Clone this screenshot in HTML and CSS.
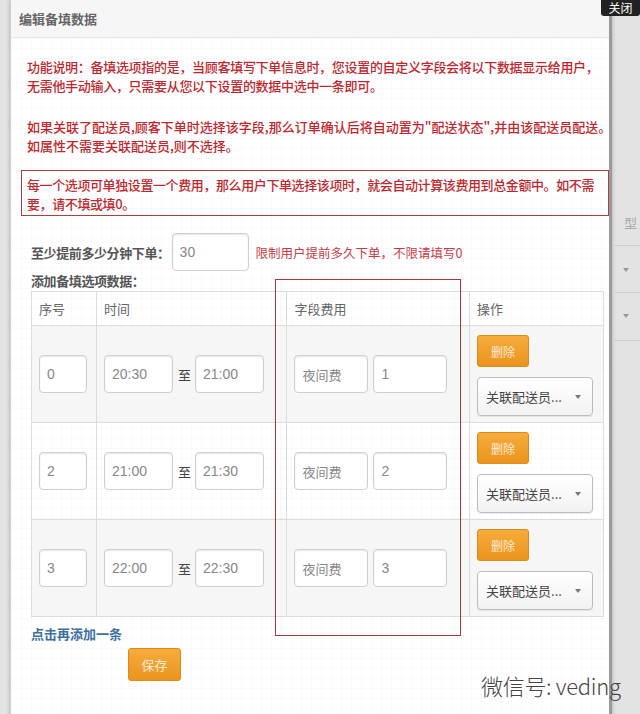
FILE: index.html
```html
<!DOCTYPE html>
<html lang="zh-CN">
<head>
<meta charset="utf-8">
<title>编辑备填数据</title>
<link rel="stylesheet" href="styles.css">
</head>
<body>
<div class="backdrop">
  <div class="side-right">
    <span class="side-char">型</span>
    <span class="side-line l1"></span>
    <span class="side-arrow a1"></span>
    <span class="side-line l2"></span>
    <span class="side-arrow a2"></span>
    <span class="side-line l3"></span>
  </div>
  <div class="modal">
    <div class="modal-head">编辑备填数据</div>
    <div class="modal-body">
      <p class="note first">功能说明：备填选项指的是，当顾客填写下单信息时，您设置的自定义字段会将以下数据显示给用户，<br>无需他手动输入，只需要从您以下设置的数据中选中一条即可。</p>
      <p class="note">如果关联了配送员,顾客下单时选择该字段,那么订单确认后将自动置为"配送状态",并由该配送员配送。<br>如属性不需要关联配送员,则不选择。</p>
      <div class="note-box">每一个选项可单独设置一个费用，那么用户下单选择该项时，就会自动计算该费用到总金额中。如不需<br>要，请不填或填0。</div>

      <div class="form">
        <div class="limit-row">
          <span class="label">至少提前多少分钟下单：</span>
          <input class="inp w-limit" type="text" value="30">
          <span class="hint">限制用户提前多久下单，不限请填写0</span>
        </div>
        <div class="label add-label">添加备填选项数据：</div>
        <table class="grid">
          <thead>
            <tr><th class="c1">序号</th><th class="c2">时间</th><th class="c3">字段费用</th><th class="c4">操作</th></tr>
          </thead>
          <tbody>
            <tr class="odd">
              <td><input class="inp w-seq" value="0"></td>
              <td><input class="inp w-time" value="20:30"><span class="to">至</span><input class="inp w-time" value="21:00"></td>
              <td><input class="inp w-fee fee-name" value="夜间费"><input class="inp w-fee gap" value="1"></td>
              <td class="ops"><button class="btn">删除</button><div class="sel">关联配送员...<span class="caret"></span></div></td>
            </tr>
            <tr>
              <td><input class="inp w-seq" value="2"></td>
              <td><input class="inp w-time" value="21:00"><span class="to">至</span><input class="inp w-time" value="21:30"></td>
              <td><input class="inp w-fee fee-name" value="夜间费"><input class="inp w-fee gap" value="2"></td>
              <td class="ops"><button class="btn">删除</button><div class="sel">关联配送员...<span class="caret"></span></div></td>
            </tr>
            <tr class="odd">
              <td><input class="inp w-seq" value="3"></td>
              <td><input class="inp w-time" value="22:00"><span class="to">至</span><input class="inp w-time" value="22:30"></td>
              <td><input class="inp w-fee fee-name" value="夜间费"><input class="inp w-fee gap" value="3"></td>
              <td class="ops"><button class="btn">删除</button><div class="sel">关联配送员...<span class="caret"></span></div></td>
            </tr>
          </tbody>
        </table>
        <a class="add-link">点击再添加一条</a>
        <div class="save-row"><button class="btn save">保存</button></div>
      </div>
      <div class="annot"></div>
    </div>
  </div>
  <div class="close">关闭</div>
  <div class="watermark">微信号: veding</div>
</div>
</body>
</html>
```

FILE: styles.css
```css
* { box-sizing: border-box; }
html, body { margin: 0; padding: 0; }
body {
  width: 640px;
  height: 714px;
  overflow: hidden;
  background: #e3e3e3;
  font-family: "Noto Sans CJK SC", "Noto Sans", sans-serif;
  font-size: 13px;
  color: #555;
}
.backdrop {
  position: relative;
  width: 640px;
  height: 714px;
  padding-left: 10px;
}
.modal {
  width: 602px;
  height: 730px;
  background: #fff;
  border-left: 1px solid #d0d0d0;
  border-right: 3px solid #9a9a9a;
  box-shadow: 0 0 4px rgba(0,0,0,0.25);
}
.modal-head {
  height: 38px;
  line-height: 38px;
  padding-left: 8px;
  background: #f6f6f6;
  border-bottom: 1px solid #e6e6e6;
  font-weight: bold;
  color: #666;
  font-size: 13px;
}
.modal-body {
  position: relative;
  padding: 19px 0 0 10px;
  height: 692px;
  background-color: #fff;
  background-image:
    linear-gradient(to right, rgba(0,0,0,0.018) 1px, transparent 1px),
    linear-gradient(to bottom, rgba(0,0,0,0.018) 1px, transparent 1px);
  background-size: 10px 10px;
}
.note {
  margin: 0 0 22px 6px;
  color: #c0272d;
  font-weight: 500;
  line-height: 19px;
  white-space: nowrap;
}
.note.first { letter-spacing: -0.3px; }
.note-box {
  width: 588px;
  margin-top: -7px;
  border: 1.5px solid #a84040;
  padding: 4px 5px 2px 5px;
  color: #c0272d;
  font-weight: 500;
  line-height: 19px;
  white-space: nowrap;
  letter-spacing: -0.4px;
}
.form { padding-left: 10px; }
.limit-row {
  display: flex;
  align-items: center;
  margin-top: 17px;
  height: 38px;
}
.label { font-weight: bold; color: #555; letter-spacing: -0.4px; }
.hint { color: #c93a45; margin-left: 7px; font-size: 12.5px; }
.add-label { margin-top: 0; line-height: 19px; }
.inp {
  height: 38px;
  border: 1px solid #cfcfcf;
  border-radius: 4px;
  box-shadow: inset 0 1px 2px rgba(0,0,0,0.1);
  padding: 0 7px;
  font-family: "Liberation Sans", "Noto Sans CJK SC", sans-serif;
  font-size: 14px;
  color: #888;
  background: #fff;
  vertical-align: middle;
  outline: none;
}
.w-limit { width: 77px; margin-left: 2px; }
.w-seq { width: 48px; }
.w-time { width: 69px; }
.w-fee { width: 74px; }
.fee-name { font-family: "Noto Sans CJK SC", sans-serif; font-size: 13px; }
.gap { margin-left: 5px; }
.to { display: inline-block; margin: 0 4px 0 5px; vertical-align: middle; color: #444; font-size: 13px; }
.grid {
  margin-top: 1px;
  width: 573px;
  border-collapse: collapse;
  border: 1px solid #dcdcdc;
}
.grid th, .grid td {
  border: 1px solid #dcdcdc;
  text-align: left;
  padding: 0 7px;
  font-weight: normal;
  white-space: nowrap;
}
.grid th { height: 34px; color: #666; font-size: 13px; }
.c1 { width: 65px; }
.c2 { width: 191px; }
.c3 { width: 183px; }
.c4 { width: 134px; }
.grid td { height: 97px; vertical-align: middle; }
.grid tr.odd td { background: rgba(245,245,245,0.85); }
.grid td.ops { vertical-align: top; padding-top: 9px; }
.btn {
  display: block;
  width: 52px;
  height: 32px;
  border: 1px solid #de8a1a;
  border-radius: 3px;
  background: linear-gradient(#f6ac3c, #ea941e);
  color: #fde9d6;
  font-family: "Noto Sans CJK SC", sans-serif;
  font-size: 12px;
  padding: 0;
}
.sel {
  position: relative;
  margin-top: 10px;
  width: 116px;
  height: 39px;
  line-height: 37px;
  border: 1px solid #bdbdbd;
  border-radius: 4px;
  background: linear-gradient(#fff, #f2f2f2);
  padding-left: 8px;
  color: #444;
  font-size: 13px;
  box-shadow: 0 1px 1px rgba(0,0,0,0.08);
}
.caret {
  position: absolute;
  right: 11px;
  top: 17px;
  border-left: 3px solid transparent;
  border-right: 3px solid transparent;
  border-top: 4px solid #777;
}
.add-link {
  display: block;
  margin-top: 7px;
  color: #3d6f9e;
  font-weight: bold;
  line-height: 19px;
}
.save-row { padding-left: 97px; margin-top: 5px; }
.btn.save { width: 53px; height: 33px; font-size: 13px; }
.annot {
  position: absolute;
  left: 264px;
  top: 241px;
  width: 186px;
  height: 357px;
  border: 1px solid #a83a3a;
  pointer-events: none;
}
.close {
  position: absolute;
  right: 0;
  top: 0;
  width: 39px;
  height: 16px;
  background: #222;
  color: #fff;
  border-radius: 0 0 3px 3px;
  font-size: 12px;
  line-height: 16px;
  text-align: center;
}
.watermark {
  position: absolute;
  left: 481px;
  top: 669px;
  font-family: "Noto Sans CJK SC", sans-serif;
  font-weight: 300;
  font-size: 22px;
  color: #444;
  letter-spacing: -0.3px;
}
.side-right {
  position: absolute;
  left: 614px;
  top: 0;
  width: 26px;
  height: 714px;
}
.side-char { position: absolute; left: 10px; top: 213px; font-size: 13px; color: #aaa; }
.side-line { position: absolute; left: 0; width: 26px; height: 1px; background: #cfcfcf; }
.l1 { top: 245px; }
.l2 { top: 292px; }
.l3 { top: 340px; }
.side-arrow {
  position: absolute;
  left: 9px;
  border-left: 3px solid transparent;
  border-right: 3px solid transparent;
  border-top: 4px solid #999;
}
.a1 { top: 268px; }
.a2 { top: 314px; }
```
